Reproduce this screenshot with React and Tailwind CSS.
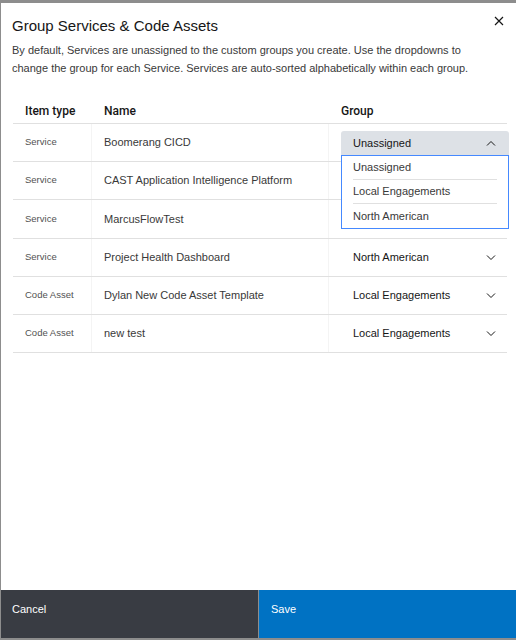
import React from "react";

const rows = [
  { type: "Service", name: "Boomerang CICD", group: "Unassigned", open: true },
  { type: "Service", name: "CAST Application Intelligence Platform", group: "" },
  { type: "Service", name: "MarcusFlowTest", group: "" },
  { type: "Service", name: "Project Health Dashboard", group: "North American" },
  { type: "Code Asset", name: "Dylan New Code Asset Template", group: "Local Engagements" },
  { type: "Code Asset", name: "new test", group: "Local Engagements" }
];

const options = ["Unassigned", "Local Engagements", "North American"];

function Chevron({ up }) {
  return (
    <svg width="10" height="6" viewBox="0 0 10 6" fill="none" stroke="#161616" strokeWidth="1">
      {up ? <path d="M1 5.5 L5 1.5 L9 5.5" /> : <path d="M1 0.5 L5 4.5 L9 0.5" />}
    </svg>
  );
}

export default function App() {
  return (
    <div
      className="w-[516px] h-[640px] bg-[#8d8d8d] pt-[3px] pl-px pb-[2px] flex flex-col"
      style={{ fontFamily: '"Liberation Sans", Arial, sans-serif' }}
    >
      <div className="flex-1 bg-white flex flex-col text-[#161616]">
        <div className="flex-1 px-[11px]">
          {/* header */}
          <div className="flex justify-between items-start pt-[13px]">
            <h2 className="text-[15px] leading-[19px] font-normal">Group Services &amp; Code Assets</h2>
            <button className="mt-0 mr-[1px] text-[#161616]">
              <svg width="10" height="10" viewBox="0 0 10 10" stroke="#161616" strokeWidth="1.2">
                <path d="M1 1 L9 9 M9 1 L1 9" />
              </svg>
            </button>
          </div>
          <p className="mt-[6px] w-[470px] text-[11px] leading-[18px] text-[#393939]">
            By default, Services are unassigned to the custom groups you create. Use the dropdowns to change the group for each Service. Services are auto-sorted alphabetically within each group.
          </p>

          {/* table */}
          <div className="mt-[21px] mx-px w-[494px]">
            <div
              className="flex h-[26px] items-center border-b border-[#e0e0e0] text-[12px] font-medium text-[#161616]"
              style={{ fontFamily: "Roboto, Arial, sans-serif" }}
            >
              <div className="w-[79px] shrink-0 pl-[12px]">Item type</div>
              <div className="w-[237px] shrink-0 pl-[12px]">Name</div>
              <div className="flex-1 pl-[12px]">Group</div>
            </div>
            {rows.map((r, i) => (
              <div key={i} className={`flex border-b border-[#e0e0e0] ${i === 2 ? "h-[39px]" : "h-[38px]"}`}>
                <div className="w-[79px] shrink-0 pl-[12px] flex items-center text-[9.5px] text-[#525252] border-r border-[#f4f4f4]">
                  {r.type}
                </div>
                <div className="w-[237px] shrink-0 pl-[12px] flex items-center text-[11px] text-[#393939] border-r border-[#f4f4f4]">
                  {r.name}
                </div>
                <div className="flex-1 min-w-0 flex items-center relative pl-[12px]">
                  {r.open ? (
                    <>
                      <div className="w-[168px] shrink-0 h-[24px] mt-px bg-[#dde1e6] rounded-t-[3px] flex items-center justify-between pl-[12px] pr-[13px] text-[11px] relative z-20">
                        <span>Unassigned</span>
                        <Chevron up />
                      </div>
                      <div className="absolute left-[12px] top-[31px] w-[168px] bg-white border border-[#4589ff] z-10 px-[11px]">
                        {options.map((o, j) => (
                          <div
                            key={o}
                            className={`h-[24px] flex items-center text-[11px] text-[#393939] ${j < 2 ? "border-b border-[#e0e0e0]" : ""}`}
                          >
                            {o}
                          </div>
                        ))}
                      </div>
                    </>
                  ) : r.group ? (
                    <div className="w-[168px] shrink-0 flex items-center justify-between pl-[12px] pr-[13px] text-[11px]">
                      <span>{r.group}</span>
                      <Chevron />
                    </div>
                  ) : null}
                </div>
              </div>
            ))}
          </div>
        </div>

        {/* footer */}
        <div className="flex h-[48px] text-[11px] text-white">
          <button className="w-[257px] bg-[#393c43] text-left pl-[11px] pb-[10px] flex items-center">Cancel</button>
          <div className="w-px bg-[#8d8d8d]"></div>
          <button className="flex-1 bg-[#0072c3] text-left pl-[12px] pb-[10px] flex items-center">Save</button>
        </div>
      </div>
    </div>
  );
}
